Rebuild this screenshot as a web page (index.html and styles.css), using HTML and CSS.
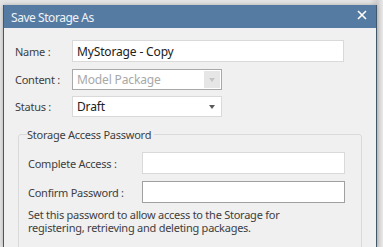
FILE: index.html
```html
<!DOCTYPE html>
<html>
<head>
<meta charset="utf-8">
<link rel="stylesheet" href="styles.css">
</head>
<body>
<div class="window">
  <div class="titlebar">
    <span class="title">Save Storage As</span>
    <svg class="close" width="10" height="10" viewBox="0 0 10 10"><path d="M1 1 L9 9 M9 1 L1 9" stroke="#fff" stroke-width="1.6"/></svg>
  </div>
  <div class="content">
    <div class="row row-name">
      <label class="lbl">Name :</label>
      <div class="input wide">MyStorage - Copy</div>
    </div>
    <div class="row row-content">
      <label class="lbl">Content :</label>
      <div class="select disabled"><span>Model Package</span><span class="dropbtn"><i class="arrow"></i></span></div>
    </div>
    <div class="row row-status">
      <label class="lbl">Status :</label>
      <div class="select"><span>Draft</span><span class="dropbtn plain"><i class="arrow"></i></span></div>
    </div>
    <fieldset class="group">
      <legend>Storage Access Password</legend>
      <div class="prow first">
        <label class="plbl">Complete Access :</label>
        <div class="input pw"></div>
      </div>
      <div class="prow">
        <label class="plbl">Confirm Password :</label>
        <div class="input pw focus"></div>
      </div>
      <p class="desc">Set this password to allow access to the Storage for registering, retrieving and deleting packages.</p>
      <div class="input next"></div>
    </fieldset>
  </div>
</div>
</body>
</html>
```
FILE: styles.css
```css
html, body {
  margin: 0;
  padding: 0;
  height: 247px;
  overflow: hidden;
}
body {
  background: linear-gradient(to right, #e4e4e4 0px, #e4e4e4 370px, #cfcfcf 377px, #e8e8e8 383px);
  font-family: "Noto Sans", "Open Sans", sans-serif;
  font-size: 11px;
  letter-spacing: -0.25px;
  color: #3e3e3e;
}
.window {
  margin: 5px 0 0 3px;
  width: 372px;
  height: 242px;
  overflow: hidden;
  border-left: 1px solid #45576b;
  border-right: 1px solid #45576b;
  background: #f0f0f0;
  box-shadow: 0 0 4px rgba(0,0,0,0.25);
}
.titlebar {
  height: 23px;
  background: #567ba3;
  display: flex;
  align-items: center;
  justify-content: space-between;
  padding: 0 10px 0 8px;
  margin-left: -1px;
  margin-right: -1px;
}
.title {
  color: #eef3f8;
  font-size: 12px;
  letter-spacing: -0.45px;
  margin-top: 2px;
}
.close {
  margin-top: -4px;
}
.content {
  padding: 12px 0 0 11px;
}
.row {
  display: flex;
  align-items: center;
}
.lbl {
  width: 57px;
}
.row-name { height: 22px; }
.row-content { height: 20px; margin-top: 7px; }
.row-status { height: 20px; margin-top: 7px; }
.input {
  box-sizing: border-box;
  background: #fff;
  border: 1px solid #d9d9d9;
  height: 22px;
  padding: 2px 0 0 4px;
  color: #202020;
}
.input.wide {
  width: 272px;
  height: 22px;
  padding-top: 2px;
  font-size: 12px;
  letter-spacing: -0.15px;
}
.select {
  box-sizing: border-box;
  width: 150px;
  height: 21px;
  background: #fff;
  border: 1px solid #d9d9d9;
  display: flex;
  align-items: center;
  justify-content: space-between;
  padding-left: 4px;
  color: #202020;
  font-size: 12px;
  letter-spacing: -0.15px;
}
.select.disabled {
  border-color: #a8a8a8;
  color: #a8a8a8;
}
.dropbtn {
  width: 16px;
  height: 17px;
  margin-right: 1px;
  background: #e6e6e6;
  display: flex;
  align-items: center;
  justify-content: center;
}
.dropbtn.plain { background: transparent; }
.arrow {
  width: 0;
  height: 0;
  border-left: 3px solid transparent;
  border-right: 3px solid transparent;
  border-top: 4px solid #c4c4c4;
  margin-top: 1px;
}
.plain .arrow { border-top-color: #5a5a5a; }
.group {
  margin: 11px 0 0 3px;
  width: 344px;
  box-sizing: border-box;
  border: 1px solid #dadada;
  border-radius: 3px;
  padding: 10px 0 0 9px;
  height: 140px;
}
.group legend {
  padding: 0 3px 0 0;
  margin-left: -1px;
  color: #3e3e3e;
  line-height: 15px;
}
.prow {
  display: flex;
  align-items: center;
  height: 22px;
  margin-top: 7px;
}
.prow.first { margin-top: 0; }
.plbl { width: 114px; }
.input.pw { width: 203px; }
.input.focus { border-color: #a0a0a0; }
.desc {
  margin: 5px 0 0 0;
  line-height: 13px;
  width: 290px;
}
.input.next {
  margin-top: 13px;
  margin-left: 2px;
  width: 316px;
}
```
